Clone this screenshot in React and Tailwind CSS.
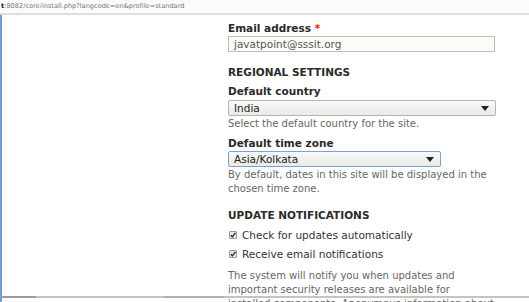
import React from 'react';

const Arrow = () => (
  <svg width="8" height="5" viewBox="0 0 8 5" className="shrink-0">
    <path d="M0 0 H8 L4 5 Z" fill="#222" />
  </svg>
);

const Select = ({ value, width, focused }) => (
  <div
    className={
      'flex h-[16px] items-center justify-between rounded-[2px] border bg-gradient-to-b from-[#fafaf8] to-[#e9e9e6] pl-[5px] pr-[6px] text-[10.5px] leading-none text-[#222] ' +
      (focused ? 'border-[#7f9fd8]' : 'border-[#b4b4b0]')
    }
    style={{ width }}
  >
    <span>{value}</span>
    <Arrow />
  </div>
);

const Check = ({ label, className }) => (
  <div className={'flex h-[14px] items-center gap-[5px] pl-[1px] ' + className}>
    <div className="flex h-[8px] w-[8px] items-center justify-center rounded-[1px] border border-[#9a9a9a] bg-[#e6e6e6]">
      <svg width="6" height="6" viewBox="0 0 6 6">
        <path d="M0.8 3.2 L2.4 4.8 L5.4 0.8" stroke="#222" strokeWidth="1.3" fill="none" />
      </svg>
    </div>
    <span className="text-[10.5px] text-[#333]">{label}</span>
  </div>
);

export default function App() {
  return (
    <div className="relative flex h-[302px] w-[529px] flex-col overflow-hidden bg-white font-['DejaVu_Sans',sans-serif]">
      {/* address bar */}
      <div className="flex h-[15px] shrink-0 items-center border-b-2 border-[#dedede] bg-[#fbfbfb] pl-[1px] text-[6.6px] leading-none text-[#777]">
        <span className="font-bold text-[#222]">t</span>
        <span>:8082/core/install.php?langcode=en&amp;profile=standard</span>
      </div>

      <div className="flex-1 border-l-2 border-[#6e9bd0] pl-[226px] pt-[6px] leading-[14px]">
        <div className="w-[280px]">
          <div className="text-[10.5px] font-bold text-[#2a2a2a]">
            Email address <span className="text-[#e32700]">*</span>
          </div>
          <div className="mt-[1px] flex h-[16px] w-[267px] items-center border border-[#bdbdb8] bg-[#fcfcf7] pl-[5px] text-[10.5px] leading-none text-[#555]">
            javatpoint@sssit.org
          </div>

          <div className="mt-[13px] text-[10.5px] font-bold text-[#2a2a2a]">REGIONAL SETTINGS</div>

          <div className="mt-[5px] text-[10.5px] font-bold text-[#2a2a2a]">Default country</div>
          <div className="mt-[2px]">
            <Select value="India" width={268} />
          </div>
          <div className="mt-[1px] text-[10px] text-[#666]">Select the default country for the site.</div>

          <div className="mt-[5px] text-[10.5px] font-bold text-[#2a2a2a]">Default time zone</div>
          <div className="mt-[1px]">
            <Select value="Asia/Kolkata" width={213} focused />
          </div>
          <div className="mt-[1px] w-[266px] text-[10px] text-[#666]">
            By default, dates in this site will be displayed in the chosen time zone.
          </div>

          <div className="mt-[12px] text-[10.5px] font-bold text-[#2a2a2a]">UPDATE NOTIFICATIONS</div>

          <Check label="Check for updates automatically" className="mt-[6px]" />
          <Check label="Receive email notifications" className="mt-[5px]" />

          <div className="mt-[8px] whitespace-nowrap text-[10px] text-[#666]">
            The system will notify you when updates and
            <br />
            important security releases are available for
            <br />
            installed components. Anonymous information about
          </div>
        </div>
      </div>

      {/* bottom window edge */}
      <div className="absolute bottom-[4px] left-0 flex h-[2px] w-full bg-[#c4c4c4]">
        <div className="h-full w-[36px] bg-[#9c9c9c]" />
        <div className="ml-[128px] h-full w-[60px] bg-[#b0b0b0]" />
      </div>
    </div>
  );
}
